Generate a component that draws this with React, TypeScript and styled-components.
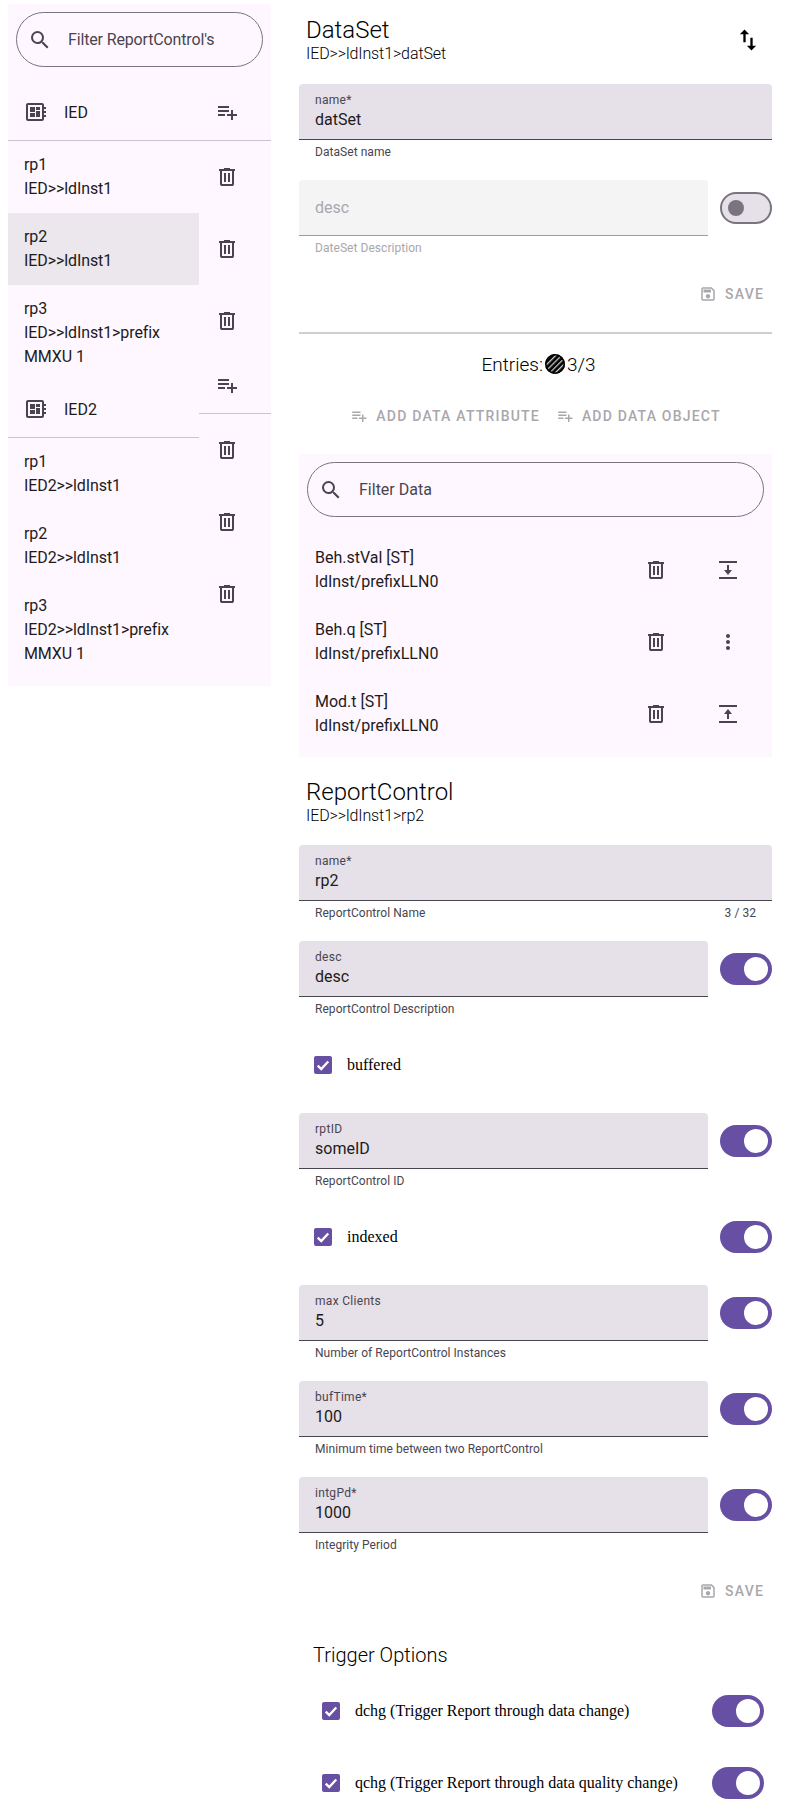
import React from "react";
import styled, { createGlobalStyle } from "styled-components";
import { MdMoreVert, MdOutlineDeveloperBoard, MdPlaylistAdd, MdSearch, MdSwapVert } from "react-icons/md";

const GlobalStyle = createGlobalStyle`
  html, body {
    margin: 0;
    padding: 0;
    background: #fff;
    font-family: "Liberation Serif", serif;
  }
`;

const Page = styled.div`
  display: flex;
  align-items: flex-start;
  gap: 28px;
  width: 800px;
  height: 1816px;
  box-sizing: border-box;
  padding: 4px 28px 0 8px;
  overflow: hidden;
  font-family: Roboto, sans-serif;
  color: #1d1b20;
`;

const Sidebar = styled.aside`
  width: 263px;
  height: 682px;
  flex: none;
  background: #fff7ff;
`;

const SearchBox = styled.div<{ $margin: string; $tight?: boolean }>`
  display: flex;
  align-items: center;
  height: 55px;
  margin: ${(p) => p.$margin};
  box-sizing: border-box;
  padding-left: 11px;
  border: 1px solid #79747e;
  border-radius: 28px;
  font-size: 16px;
  color: #49454f;
  letter-spacing: ${(p) => (p.$tight ? "-0.15px" : "0")};

  svg {
    width: 24px;
    height: 24px;
    margin-right: 16px;
    flex: none;
  }
`;

const TreeColumns = styled.div`
  display: flex;
  margin-top: 17px;
`;

const Names = styled.div`
  width: 191px;
  flex: none;
`;

const Actions = styled.div`
  width: 72px;
  flex: none;
`;

const GroupHeader = styled.div`
  display: flex;
  align-items: center;
  height: 57px;
  box-sizing: border-box;
  padding-left: 16px;
  border-bottom: 1px solid #cac4d0;
  font-size: 16px;
  color: #1d1b20;

  svg {
    width: 24px;
    height: 24px;
    color: #49454f;
    margin-right: 16px;
    flex: none;
  }
`;

const Item = styled.div<{ $selected?: boolean; $tall?: boolean }>`
  height: ${(p) => (p.$tall ? 96 : 72)}px;
  box-sizing: border-box;
  padding: 12px 8px 0 16px;
  font-size: 16px;
  line-height: 24px;
  letter-spacing: -0.1px;
  background: ${(p) => (p.$selected ? "#ebe7ec" : "transparent")};
`;

const ActionHeader = styled.div`
  display: flex;
  align-items: center;
  height: 57px;
  box-sizing: border-box;
  padding-left: 16px;
  border-bottom: 1px solid #cac4d0;
  color: #49454f;

  svg {
    width: 24px;
    height: 24px;
  }
`;

const IconCell = styled.div`
  display: flex;
  align-items: center;
  height: 72px;
  padding-left: 16px;
  color: #49454f;

  svg {
    width: 24px;
    height: 24px;
  }
`;

const Main = styled.main`
  width: 473px;
  flex: none;
`;

const TitleRow = styled.header<{ $top: number; $height: number }>`
  display: flex;
  justify-content: space-between;
  height: ${(p) => p.$height}px;
  margin-top: ${(p) => p.$top}px;
  padding-left: 7px;
`;

const Titles = styled.div``;

const Title = styled.h2`
  margin: 0;
  font-size: 24px;
  line-height: 32px;
  font-weight: 300;
  color: #000;
`;

const Path = styled.div`
  font-size: 16px;
  line-height: 16px;
  font-weight: 300;
  letter-spacing: -0.1px;
  color: #000;
`;

const SwapButton = styled.div`
  display: flex;
  width: 28px;
  height: 28px;
  margin: 12px 10px 0 0;

  svg {
    width: 28px;
    height: 28px;
    color: #000;
  }
`;

const FieldRow = styled.div<{ $bottom?: number }>`
  display: flex;
  align-items: flex-start;
  justify-content: space-between;
  margin-bottom: ${(p) => p.$bottom ?? 0}px;
`;

const Field = styled.div<{ $narrow?: boolean }>`
  width: ${(p) => (p.$narrow ? 409 : 473)}px;
  flex: none;
`;

const FieldBox = styled.div<{ $disabled?: boolean }>`
  height: 56px;
  box-sizing: border-box;
  padding: 8px 16px 0;
  border-radius: 4px 4px 0 0;
  border-bottom: 1px solid ${(p) => (p.$disabled ? "#9e9ca0" : "#49454f")};
  background: ${(p) => (p.$disabled ? "#f5f4f5" : "#e6e0e9")};
`;

const FieldLabel = styled.div`
  font-size: 12px;
  line-height: 16px;
  letter-spacing: 0.3px;
  color: #49454f;
`;

const FieldValue = styled.div`
  font-size: 16px;
  line-height: 24px;
  color: #1d1b20;
`;

const Placeholder = styled.div`
  font-size: 16px;
  line-height: 24px;
  padding-top: 8px;
  color: #a9a7ab;
`;

const Support = styled.div<{ $disabled?: boolean }>`
  display: flex;
  justify-content: space-between;
  height: 20px;
  box-sizing: border-box;
  padding: 4px 16px 0;
  font-size: 12px;
  line-height: 16px;
  letter-spacing: 0.05px;
  color: ${(p) => (p.$disabled ? "#a9a7ab" : "#49454f")};
`;

const Switch = styled.div<{ $on: boolean; $top?: number }>`
  position: relative;
  width: 52px;
  height: 32px;
  flex: none;
  box-sizing: border-box;
  margin-top: ${(p) => p.$top ?? 12}px;
  border-radius: 16px;
  background: ${(p) => (p.$on ? "#6750a4" : "#e6e0e9")};
  border: ${(p) => (p.$on ? "none" : "2px solid #79747e")};
`;

const Knob = styled.span<{ $on: boolean }>`
  position: absolute;
  top: ${(p) => (p.$on ? 4 : 6)}px;
  left: ${(p) => (p.$on ? 24 : 6)}px;
  width: ${(p) => (p.$on ? 24 : 16)}px;
  height: ${(p) => (p.$on ? 24 : 16)}px;
  border-radius: 50%;
  background: ${(p) => (p.$on ? "#fff" : "#79747e")};
`;

const SaveRow = styled.div<{ $top: number; $bottom: number }>`
  display: flex;
  justify-content: flex-end;
  margin: ${(p) => p.$top}px 0 ${(p) => p.$bottom}px;
`;

const TextButton = styled.div`
  display: flex;
  align-items: center;
  height: 40px;
  padding: 0 8px;
  font-size: 14px;
  font-weight: 500;
  letter-spacing: 1.2px;
  color: #a9a7ab;

  svg {
    width: 18px;
    height: 18px;
    margin-right: 8px;
    color: #a9a7ab;
  }
`;

const Rule = styled.hr`
  height: 2px;
  margin: 0;
  border: none;
  background: #cfcfcf;
`;

const Entries = styled.div`
  display: flex;
  justify-content: center;
  align-items: center;
  height: 24px;
  margin-top: 18px;
  padding-left: 6px;
  font-size: 19px;
  font-weight: 300;
  color: #000;

  svg {
    width: 20px;
    height: 20px;
    margin: 0 2px;
  }
`;

const AddButtons = styled.div`
  display: flex;
  justify-content: center;
  margin-top: 20px;
`;

const DataPanel = styled.section`
  height: 303px;
  margin-top: 18px;
  padding-top: 8px;
  box-sizing: border-box;
  background: #fff7ff;
`;

const DataRow = styled.div`
  display: flex;
  align-items: center;
  height: 72px;
  padding: 0 8px 0 16px;
  font-size: 16px;
  line-height: 24px;
`;

const DataText = styled.div`
  flex: 1;
`;

const RowIcon = styled.div`
  display: flex;
  align-items: center;
  justify-content: center;
  width: 72px;
  color: #49454f;

  svg {
    width: 24px;
    height: 24px;
  }
`;

const CheckRow = styled.div<{ $height: number; $indent?: boolean }>`
  display: flex;
  align-items: center;
  height: ${(p) => p.$height}px;
  padding: ${(p) => (p.$indent ? "0 8px 0 23px" : "0 0 0 15px")};
`;

const CheckBox = styled.span`
  display: flex;
  align-items: center;
  justify-content: center;
  width: 18px;
  height: 18px;
  flex: none;
  border-radius: 2px;
  background: #6750a4;
  color: #fff;

  svg {
    width: 14px;
    height: 14px;
  }
`;

const CheckLabel = styled.label`
  flex: 1;
  margin-left: 15px;
  font-family: "Liberation Serif", serif;
  font-size: 16px;
  color: #000;
`;

const SectionTitle = styled.h3`
  margin: 0 0 8px 14px;
  font-size: 20px;
  line-height: 24px;
  font-weight: 300;
  color: #000;
`;

const TrashIcon = () => (
  <svg viewBox="0 0 24 24" fill="currentColor">
    <path d="M7 21q-.825 0-1.413-.587Q5 19.825 5 19V6H4V4h5V3h6v1h5v2h-1v13q0 .825-.587 1.413Q17.825 21 17 21ZM17 6H7v13h10ZM9 17h2V8H9Zm4 0h2V8h-2Z" />
  </svg>
);

const SaveIcon = () => (
  <svg viewBox="0 0 24 24" fill="currentColor">
    <path d="M21 7v12q0 .825-.587 1.413Q19.825 21 19 21H5q-.825 0-1.413-.587Q3 19.825 3 19V5q0-.825.587-1.413Q4.175 3 5 3h12Zm-2 .85L16.15 5H5v14h14ZM12 18q1.25 0 2.125-.875T15 15q0-1.25-.875-2.125T12 12q-1.25 0-2.125.875T9 15q0 1.25.875 2.125T12 18Zm-6-8h10V6H6Z" />
  </svg>
);

const MoveDownIcon = () => (
  <svg viewBox="0 0 24 24" fill="currentColor">
    <path d="M3 3h18v2H3zM3 19h18v2H3zM11 7h2v5h3l-4 5-4-5h3z" />
  </svg>
);

const MoveUpIcon = () => (
  <svg viewBox="0 0 24 24" fill="currentColor">
    <path d="M3 3h18v2H3zM3 19h18v2H3zM11 17h2v-5h3l-4-5-4 5h3z" />
  </svg>
);

const CheckIcon = () => (
  <svg viewBox="0 0 24 24" fill="none" stroke="currentColor" strokeWidth="4">
    <path d="M3 13l6 6L21 6" />
  </svg>
);

const HatchBadge = () => (
  <svg viewBox="0 0 20 20">
    <defs>
      <pattern id="hatch" width="4" height="4" patternUnits="userSpaceOnUse" patternTransform="rotate(45)">
        <rect width="4" height="4" fill="#000" />
        <rect width="1.3" height="4" fill="#c8c8c8" />
      </pattern>
    </defs>
    <circle cx="10" cy="10" r="10" fill="url(#hatch)" />
    <circle cx="10" cy="10" r="9.2" fill="none" stroke="#000" strokeWidth="1.6" />
  </svg>
);

const ieds = [
  { name: "IED", rows: ["IED>>ldInst1", "IED>>ldInst1", "IED>>ldInst1>prefix"] },
  { name: "IED2", rows: ["IED2>>ldInst1", "IED2>>ldInst1", "IED2>>ldInst1>prefix"] },
];

const dataRows = [
  { name: "Beh.stVal [ST]", icon: <MoveDownIcon /> },
  { name: "Beh.q [ST]", icon: <MdMoreVert /> },
  { name: "Mod.t [ST]", icon: <MoveUpIcon /> },
];

const reportFields = [
  { label: "max Clients", value: "5", help: "Number of ReportControl Instances" },
  { label: "bufTime*", value: "100", help: "Minimum time between two ReportControl" },
  { label: "intgPd*", value: "1000", help: "Integrity Period" },
];

const Toggle = ({ on = true, top }: { on?: boolean; top?: number }) => (
  <Switch $on={on} $top={top}>
    <Knob $on={on} />
  </Switch>
);

const Check = ({ children }: { children: React.ReactNode }) => (
  <>
    <CheckBox>
      <CheckIcon />
    </CheckBox>
    <CheckLabel>{children}</CheckLabel>
  </>
);

const TextField = ({
  label,
  value,
  help,
  narrow,
  counter,
}: {
  label: string;
  value: string;
  help: string;
  narrow?: boolean;
  counter?: string;
}) => (
  <Field $narrow={narrow}>
    <FieldBox>
      <FieldLabel>{label}</FieldLabel>
      <FieldValue>{value}</FieldValue>
    </FieldBox>
    <Support>
      <span>{help}</span>
      {counter && <span>{counter}</span>}
    </Support>
  </Field>
);

export default function App() {
  return (
    <Page>
      <GlobalStyle />
      <Sidebar>
        <SearchBox $margin="8px 8px 0" $tight>
          <MdSearch />
          Filter ReportControl's
        </SearchBox>
        <TreeColumns>
          <Names>
            {ieds.map((ied) => (
              <div key={ied.name}>
                <GroupHeader>
                  <MdOutlineDeveloperBoard />
                  {ied.name}
                </GroupHeader>
                <Item>
                  rp1
                  <br />
                  {ied.rows[0]}
                </Item>
                <Item $selected={ied.name === "IED"}>
                  rp2
                  <br />
                  {ied.rows[1]}
                </Item>
                <Item $tall>
                  rp3
                  <br />
                  {ied.rows[2]}
                  <br />
                  MMXU 1
                </Item>
              </div>
            ))}
          </Names>
          <Actions>
            {ieds.map((ied) => (
              <div key={ied.name}>
                <ActionHeader>
                  <MdPlaylistAdd />
                </ActionHeader>
                {ied.rows.map((_, i) => (
                  <IconCell key={i}>
                    <TrashIcon />
                  </IconCell>
                ))}
              </div>
            ))}
          </Actions>
        </TreeColumns>
      </Sidebar>

      <Main>
        <TitleRow $top={10} $height={70}>
          <Titles>
            <Title>DataSet</Title>
            <Path>IED&gt;&gt;ldInst1&gt;datSet</Path>
          </Titles>
          <SwapButton>
            <MdSwapVert />
          </SwapButton>
        </TitleRow>
        <FieldRow $bottom={20}>
          <TextField label="name*" value="datSet" help="DataSet name" />
        </FieldRow>
        <FieldRow>
          <Field $narrow>
            <FieldBox $disabled>
              <Placeholder>desc</Placeholder>
            </FieldBox>
            <Support $disabled>DateSet Description</Support>
          </Field>
          <Toggle on={false} />
        </FieldRow>
        <SaveRow $top={18} $bottom={18}>
          <TextButton>
            <SaveIcon />
            SAVE
          </TextButton>
        </SaveRow>
        <Rule />
        <Entries>
          Entries:
          <HatchBadge />
          3/3
        </Entries>
        <AddButtons>
          <TextButton>
            <MdPlaylistAdd />
            ADD DATA ATTRIBUTE
          </TextButton>
          <TextButton>
            <MdPlaylistAdd />
            ADD DATA OBJECT
          </TextButton>
        </AddButtons>
        <DataPanel>
          <SearchBox $margin="0 8px 17px">
            <MdSearch />
            Filter Data
          </SearchBox>
          {dataRows.map((row) => (
            <DataRow key={row.name}>
              <DataText>
                {row.name}
                <br />
                ldInst/prefixLLN0
              </DataText>
              <RowIcon>
                <TrashIcon />
              </RowIcon>
              <RowIcon>{row.icon}</RowIcon>
            </DataRow>
          ))}
        </DataPanel>
        <TitleRow $top={19} $height={69}>
          <Titles>
            <Title>ReportControl</Title>
            <Path>IED&gt;&gt;ldInst1&gt;rp2</Path>
          </Titles>
        </TitleRow>
        <FieldRow $bottom={20}>
          <TextField label="name*" value="rp2" help="ReportControl Name" counter="3 / 32" />
        </FieldRow>
        <FieldRow>
          <TextField label="desc" value="desc" help="ReportControl Description" narrow />
          <Toggle />
        </FieldRow>
        <CheckRow $height={96}>
          <Check>buffered</Check>
        </CheckRow>
        <FieldRow>
          <TextField label="rptID" value="someID" help="ReportControl ID" narrow />
          <Toggle />
        </FieldRow>
        <CheckRow $height={96}>
          <Check>indexed</Check>
          <Toggle top={0} />
        </CheckRow>
        {reportFields.map((f, i) => (
          <FieldRow key={f.label} $bottom={i < reportFields.length - 1 ? 20 : 0}>
            <TextField label={f.label} value={f.value} help={f.help} narrow />
            <Toggle />
          </FieldRow>
        ))}
        <SaveRow $top={18} $bottom={32}>
          <TextButton>
            <SaveIcon />
            SAVE
          </TextButton>
        </SaveRow>
        <SectionTitle>Trigger Options</SectionTitle>
        <CheckRow $height={72} $indent>
          <Check>dchg (Trigger Report through data change)</Check>
          <Toggle top={0} />
        </CheckRow>
        <CheckRow $height={72} $indent>
          <Check>qchg (Trigger Report through data quality change)</Check>
          <Toggle top={0} />
        </CheckRow>
      </Main>
    </Page>
  );
}
